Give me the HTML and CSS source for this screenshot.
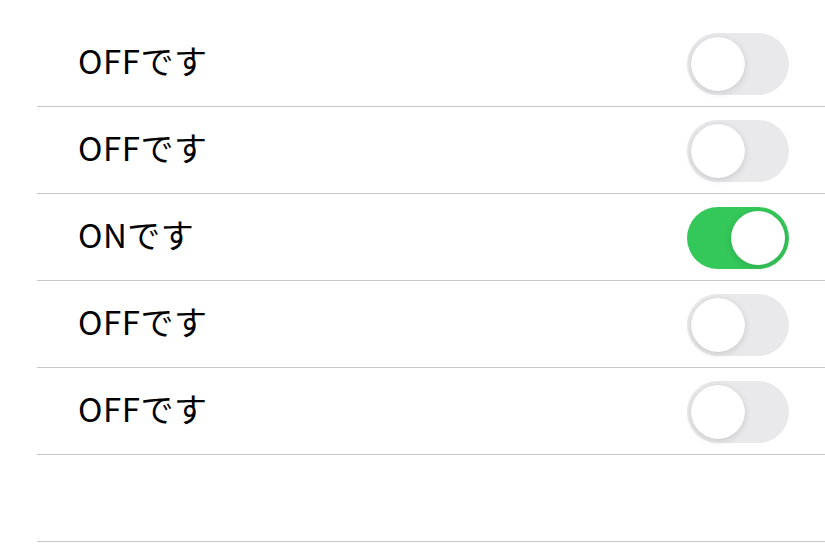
FILE: index.html
```html
<!DOCTYPE html>
<html lang="ja">
<head>
    <meta charset="UTF-8">
    <meta name="viewport" content="width=device-width, initial-scale=1.0">
    <title>Switch List</title>
    <link rel="stylesheet" href="styles.css">
</head>
<body>
    <ul class="list">
        <li class="row">
            <span class="label">OFFです</span>
            <span class="switch"><span class="knob"></span></span>
        </li>
        <li class="row">
            <span class="label">OFFです</span>
            <span class="switch"><span class="knob"></span></span>
        </li>
        <li class="row">
            <span class="label">ONです</span>
            <span class="switch on"><span class="knob"></span></span>
        </li>
        <li class="row">
            <span class="label">OFFです</span>
            <span class="switch"><span class="knob"></span></span>
        </li>
        <li class="row">
            <span class="label">OFFです</span>
            <span class="switch"><span class="knob"></span></span>
        </li>
        <li class="row empty"></li>
    </ul>
</body>
</html>
```

FILE: styles.css
```css
/* page */
body {
    font-family: "Noto Sans CJK JP", "Noto Sans", sans-serif;
    background-color: #fff;
    color: #000;
    margin: 0;
    padding: 0;
}

.list {
    list-style: none;
    margin: 0 0 0 37px;
    padding: 20px 0 0 0;
}

.row {
    display: flex;
    align-items: center;
    justify-content: space-between;
    height: 86px;
    padding: 0 36px 0 41px;
    border-bottom: 1px solid #c8c7cc;
}

.label {
    font-size: 33px;
    line-height: 1;
    letter-spacing: 0.5px;
    padding-bottom: 6px;
}

/* switch */
.switch {
    display: flex;
    align-items: center;
    justify-content: flex-start;
    box-sizing: border-box;
    width: 102px;
    height: 62px;
    margin-top: 1px;
    padding: 0 4px;
    border-radius: 31px;
    background-color: #e9e9eb;
}

.switch.on {
    justify-content: flex-end;
    background-color: #34c759;
}

.knob {
    width: 54px;
    height: 54px;
    border-radius: 50%;
    background-color: #fff;
    box-shadow: 0 2px 7px rgba(0, 0, 0, 0.13), 0 0 1px rgba(0, 0, 0, 0.12);
}
```
